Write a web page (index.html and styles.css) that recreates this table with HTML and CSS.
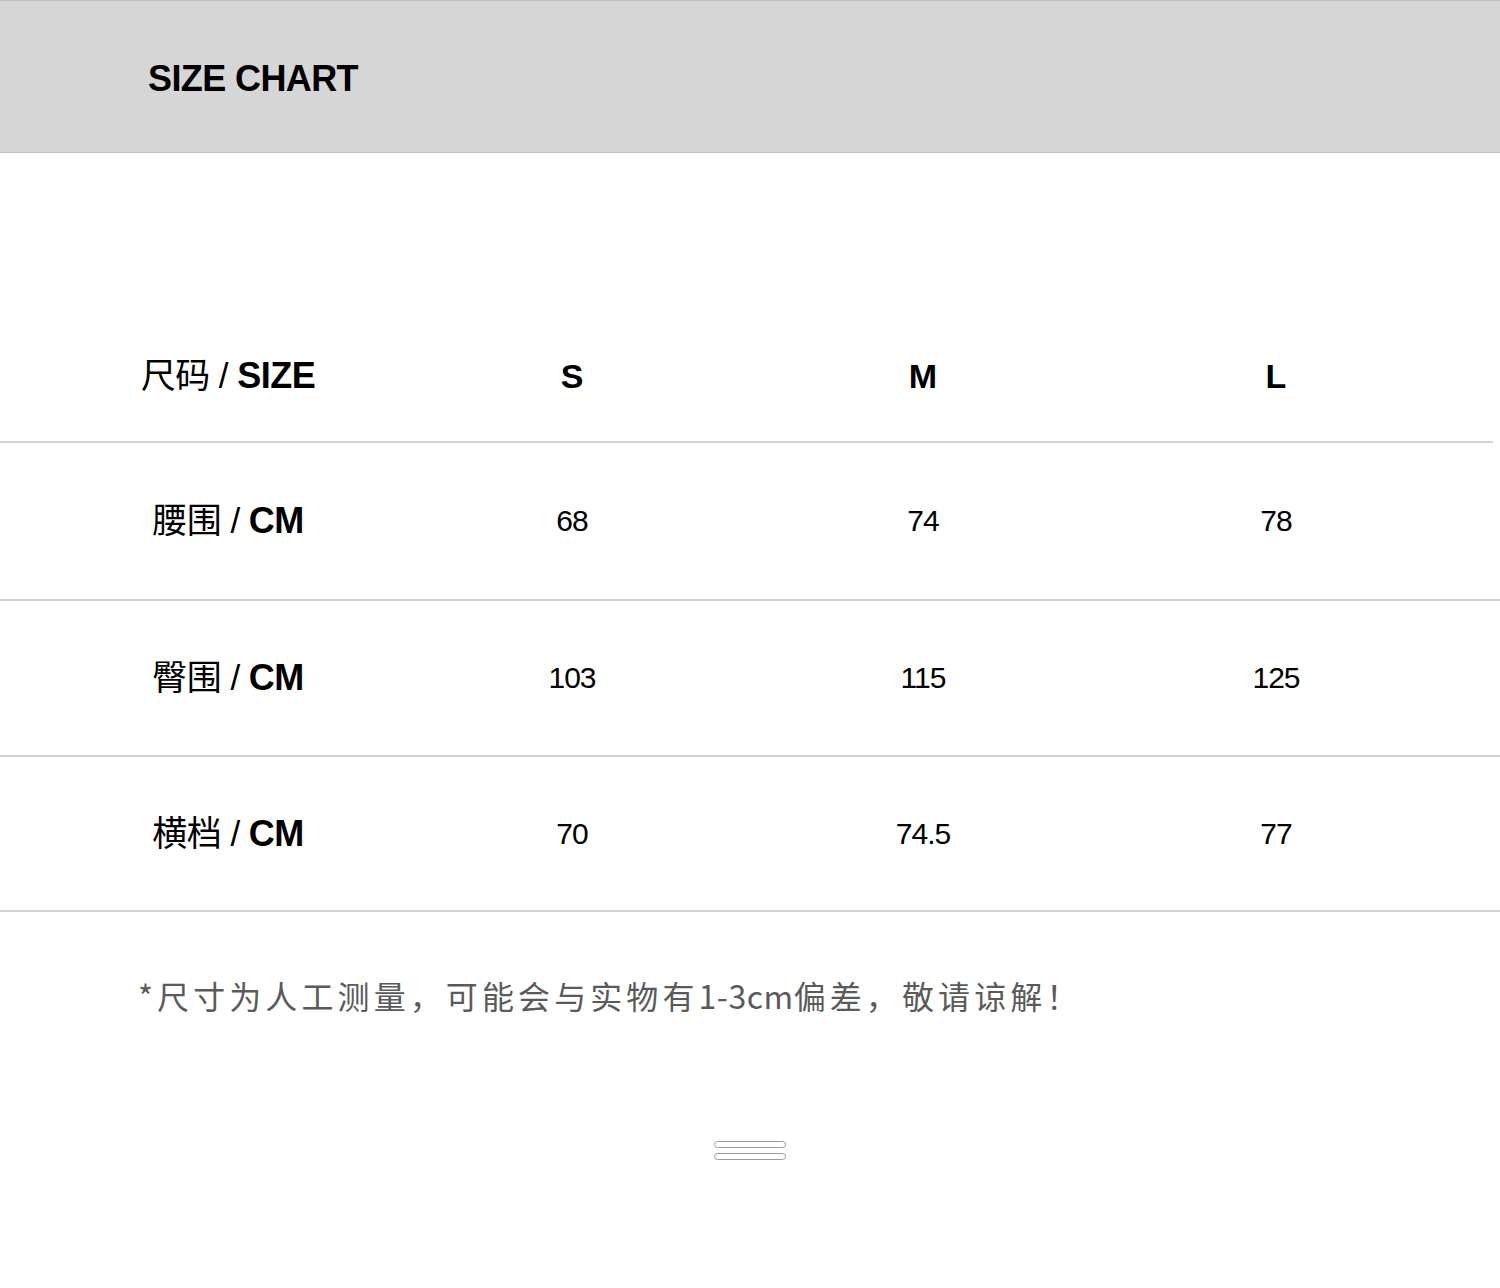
FILE: index.html
```html
<!DOCTYPE html>
<html lang="zh-CN">
<head>
<meta charset="utf-8">
<title>Size Chart</title>
<link rel="stylesheet" href="styles.css">
</head>
<body>
<header class="banner">
  <h1 class="banner-title">SIZE CHART</h1>
</header>
<main class="chart">
  <div class="row row-head">
    <div class="cell label">尺码 / <b>SIZE</b></div>
    <div class="cell size">S</div>
    <div class="cell size">M</div>
    <div class="cell size">L</div>
  </div>
  <div class="row row-data">
    <div class="cell label">腰围 / <b>CM</b></div>
    <div class="cell val">68</div>
    <div class="cell val">74</div>
    <div class="cell val">78</div>
  </div>
  <div class="row row-data">
    <div class="cell label">臀围 / <b>CM</b></div>
    <div class="cell val">103</div>
    <div class="cell val">115</div>
    <div class="cell val">125</div>
  </div>
  <div class="row row-data">
    <div class="cell label">横档 / <b>CM</b></div>
    <div class="cell val">70</div>
    <div class="cell val">74.5</div>
    <div class="cell val">77</div>
  </div>
</main>
<p class="note">*尺寸为人工测量，可能会与实物有<span class="latin">1-3cm</span>偏差，敬请谅解！</p>
<div class="menu-icon">
  <span class="bar"></span>
  <span class="bar"></span>
</div>
</body>
</html>
```

FILE: styles.css
```css
html, body {
  margin: 0;
  padding: 0;
  background: #ffffff;
}
body {
  width: 1500px;
  font-family: "Liberation Sans", "Noto Sans CJK SC", sans-serif;
  color: #000;
}
.banner {
  height: 151px;
  background: #d6d6d6;
  border-top: 1px solid #bdbdbd;
  border-bottom: 1px solid #bdbdbd;
  display: flex;
  align-items: center;
  padding-left: 148px;
}
.banner-title {
  margin: 0;
  font-size: 36px;
  font-weight: 700;
  letter-spacing: -0.6px;
  line-height: 1;
  position: relative;
  top: 2px;
}
.chart {
  margin-top: 156px;
}
.row {
  display: grid;
  grid-template-columns: 350px 338px 364px 342px;
  padding-left: 53px;
  align-items: center;
  border-bottom: 2px solid #d3d3d3;
}
.row-head {
  height: 132px;
  margin-right: 7px;
}
.row-data {
  height: 156px;
}
.row-data:nth-child(3) {
  height: 154px;
}
.row-data:nth-child(4) {
  height: 153px;
}
.cell {
  text-align: center;
  line-height: 40px;
  height: 40px;
}
.label {
  font-size: 35px;
  font-weight: 400;
  letter-spacing: -0.5px;
}
.label b {
  font-weight: 700;
  font-size: 36px;
}
.size {
  font-size: 34px;
  font-weight: 700;
}
.val {
  font-size: 30px;
  letter-spacing: -1px;
}
.row-head .cell {
  padding-top: 1px;
}
.note {
  margin: 60px 0 0 138px;
  font-family: "Noto Sans CJK SC", sans-serif;
  font-size: 32px;
  color: #5a5a5a;
  letter-spacing: 4.1px;
  line-height: 46px;
}
.latin {
  letter-spacing: 0.5px;
}
.menu-icon {
  display: flex;
  flex-direction: column;
  align-items: center;
  gap: 5px;
  margin-top: 123px;
}
.bar {
  display: block;
  width: 70px;
  height: 5px;
  border: 1px solid #9a9a9a;
  border-radius: 4px;
}
```
